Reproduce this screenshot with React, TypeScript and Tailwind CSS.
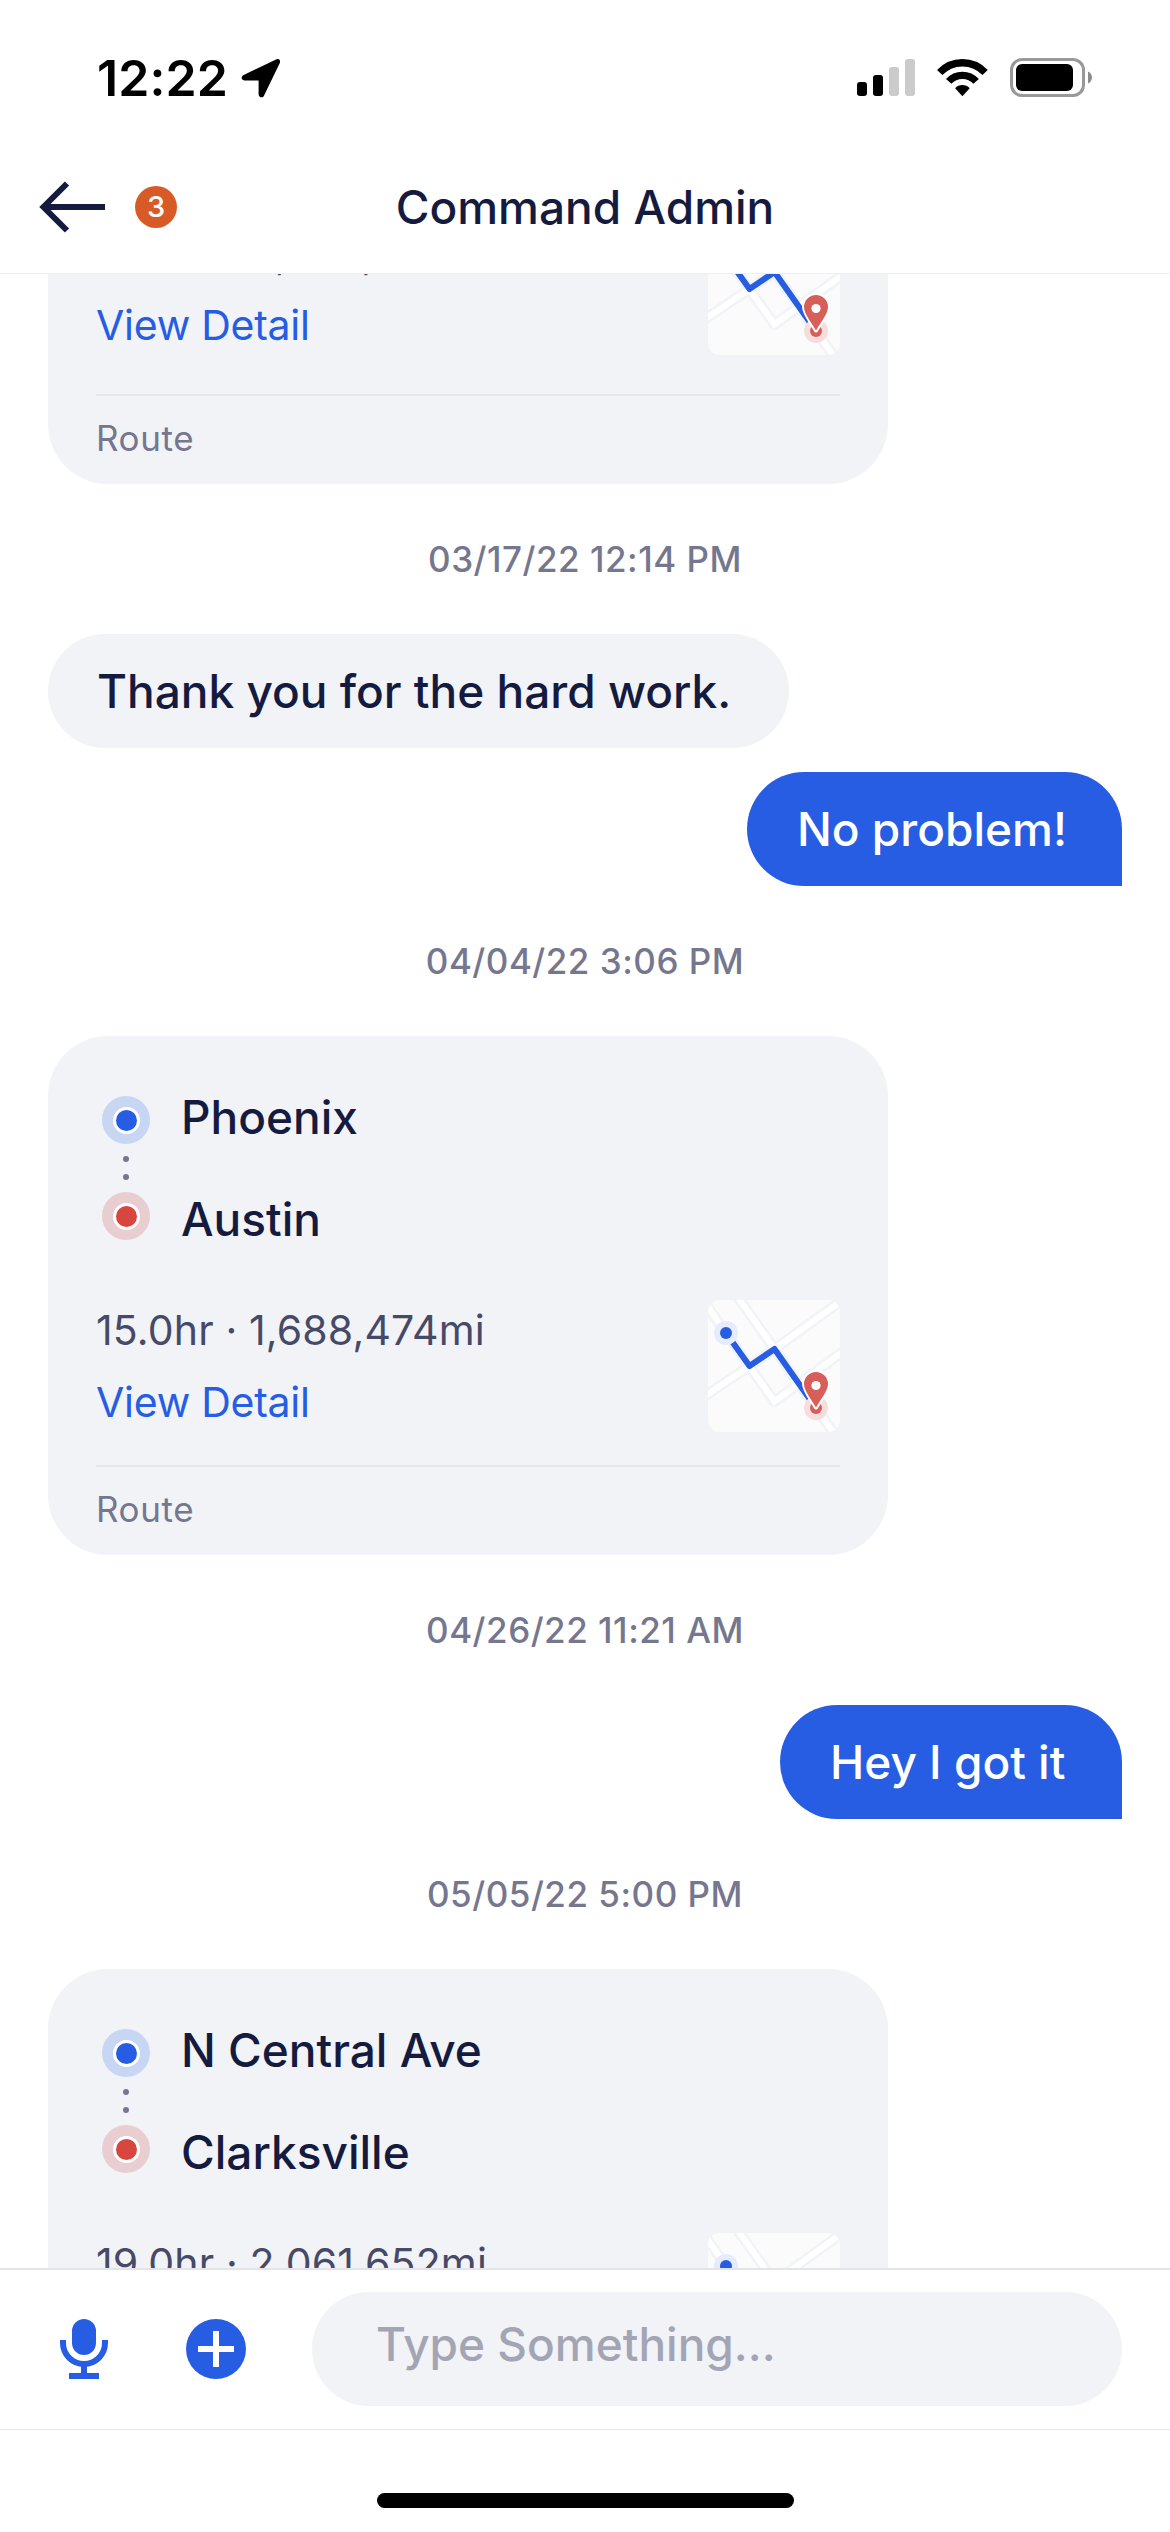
import type React from "react";

interface Stops {
  from: string;
  to: string;
}

type Entry =
  | { kind: "date"; text: string }
  | { kind: "received"; text: string }
  | { kind: "sent"; text: string; className: string }
  | { kind: "route"; summary: string; stops?: Stops };

const entries: Entry[] = [
  { kind: "route", summary: "20.0hr · 1,688,420mi" },
  { kind: "date", text: "03/17/22 12:14 PM" },
  { kind: "received", text: "Thank you for the hard work." },
  { kind: "sent", text: "No problem!", className: "mt-6 w-[375px] pl-[50px]" },
  { kind: "date", text: "04/04/22 3:06 PM" },
  {
    kind: "route",
    summary: "15.0hr · 1,688,474mi",
    stops: { from: "Phoenix", to: "Austin" },
  },
  { kind: "date", text: "04/26/22 11:21 AM" },
  { kind: "sent", text: "Hey I got it", className: "w-[342px] pl-[50px]" },
  { kind: "date", text: "05/05/22 5:00 PM" },
  {
    kind: "route",
    summary: "19.0hr · 2,061,652mi",
    stops: { from: "N Central Ave", to: "Clarksville" },
  },
];

function StatusBar(): React.ReactElement {
  return (
    <div className="flex h-[141px] items-start justify-between pr-[78px] pl-[97px]">
      <div className="flex pt-[48px]">
        <span className="w-[144px] text-[50px] leading-[60px] font-semibold tracking-[0.1px] text-black">
          12:22
        </span>
        <svg className="mt-[10px] h-[40px] w-[40px]" viewBox="0 0 40 40">
          <path
            d="M35.6 1.3 2.2 17.2C-.2 18.6.2 22.4 3.4 22.4H17.6V36.2C17.6 39.8 22 40.6 23.2 37.2L38.8 5C39.8 2 38 .2 35.6 1.3Z"
            fill="#000"
          />
        </svg>
      </div>
      <div className="flex pt-[58px]">
        <svg className="h-[40px] w-[58px]" viewBox="0 0 58 40">
          <rect x="0" y="24" width="10" height="14" rx="3" fill="#000" />
          <rect x="16" y="17" width="10" height="21" rx="3" fill="#000" />
          <rect x="32" y="9" width="10" height="29" rx="3" fill="#cbcbcb" />
          <rect x="48" y="1" width="10" height="37" rx="3" fill="#cbcbcb" />
        </svg>
        <svg className="ml-[22px] h-[40px] w-[51px]" viewBox="0 0 51 40">
          <g fill="none" stroke="#000" strokeWidth="7.3">
            <path d="M2.7 14.6A31.1 31.1 0 0 1 48.1 14.6" />
            <path d="M11.7 23.4A18.4 18.4 0 0 1 39.1 23.4" />
          </g>
          <path d="M18.1 30.2A9.8 9.8 0 0 1 32.7 30.2L25.4 38.2Z" fill="#000" />
        </svg>
        <svg className="ml-[22px] h-[40px] w-[82px]" viewBox="0 0 82 40">
          <rect
            x="1.5"
            y="1.5"
            width="72"
            height="36"
            rx="10.5"
            fill="none"
            stroke="#999"
            strokeWidth="3"
          />
          <rect x="6" y="6" width="57" height="27" rx="6" fill="#000" />
          <path d="M78 13.5C80.6 14.6 82 17 82 19.5S80.6 24.4 78 25.5Z" fill="#8c8c8c" />
        </svg>
      </div>
    </div>
  );
}

function Header(): React.ReactElement {
  return (
    <header className="h-[274px] shrink-0 border-b border-[#eeeff3] bg-white">
      <StatusBar />
      <div className="grid h-[132px] grid-cols-[1fr_auto_1fr] items-center px-[39px]">
        <div className="flex items-center gap-[29px]">
          <svg className="h-[52px] w-[67px]" viewBox="0 0 67 52">
            <path
              d="M66 26H5M28 2.5 4.5 26 28 49.5"
              fill="none"
              stroke="#151b3f"
              strokeWidth="6"
            />
          </svg>
          <span className="h-[42px] w-[42px] rounded-full bg-[#d85b27] text-center text-[29px] leading-[42px] font-medium text-white">
            3
          </span>
        </div>
        <h1 className="text-[46px] font-medium whitespace-nowrap">Command Admin</h1>
      </div>
    </header>
  );
}

function MapThumb(): React.ReactElement {
  const roads = [
    "M-10-7 18 33 41.5 66.5 66.5 101.5 140 48",
    "M-10 101 41.5 66 66.5 49 140-4",
    "M24-11 66.5 49 108 108 130 139",
  ];
  return (
    <svg className="h-[132px] w-[132px] shrink-0 rounded-xl bg-[#fbfbfc]" viewBox="0 0 132 132">
      <g fill="none" stroke="#f2f3f7" strokeWidth="11" strokeLinejoin="round">
        {roads.map((d) => (
          <path key={d} d={d} />
        ))}
      </g>
      <g fill="none" stroke="#fff" strokeWidth="6">
        {roads.map((d) => (
          <path key={d} d={d} />
        ))}
      </g>
      <path
        d="M18 33 41.5 66 66.5 49 108 108"
        fill="none"
        stroke="#265de2"
        strokeWidth="6"
        strokeLinejoin="round"
      />
      <circle cx="18" cy="33" r="12" fill="#e6ecfb" />
      <circle cx="18" cy="33" r="6" fill="#265de2" />
      <circle cx="108" cy="108" r="12" fill="#f8dddd" />
      <circle cx="108" cy="108" r="6" fill="#d85e59" />
      <path
        d="M108 107.5C104.5 101 96 91 96 84A12 12 0 0 1 120 84C120 91 111.5 101 108 107.5Z"
        fill="#d85e59"
        stroke="#fff"
        strokeWidth="4"
        strokeLinejoin="round"
        paintOrder="stroke"
      />
      <circle cx="108" cy="85.5" r="4.6" fill="#fff" />
    </svg>
  );
}

function RouteRail(): React.ReactElement {
  return (
    <div className="mt-[30px] flex w-[48px] flex-col items-center">
      <span className="flex h-[48px] w-[48px] items-center justify-center rounded-full bg-[#c7d6f3]">
        <span className="h-[27px] w-[27px] rounded-full border-[3px] border-white bg-[#265de2]" />
      </span>
      <span className="mt-3 h-[6px] w-[6px] rounded-full bg-[#75778f]" />
      <span className="mt-3 mb-3 h-[6px] w-[6px] rounded-full bg-[#75778f]" />
      <span className="flex h-[48px] w-[48px] items-center justify-center rounded-full bg-[#e9ced1]">
        <span className="h-[27px] w-[27px] rounded-full border-[3px] border-white bg-[#d8473f]" />
      </span>
    </div>
  );
}

function RouteCard({ summary, stops }: { summary: string; stops?: Stops }): React.ReactElement {
  return (
    <article
      className={`w-[840px] shrink-0 self-start rounded-[60px] bg-[#f1f3f7] px-[48px] pb-[4px] ${
        stops ? "pt-[30px]" : "-mt-[81px]"
      }`}
    >
      {stops && (
        <div className="flex gap-[31px] pl-[6px]">
          <RouteRail />
          <div className="text-[46px] leading-[102px] font-medium">
            <p>{stops.from}</p>
            <p>{stops.to}</p>
          </div>
        </div>
      )}
      <div className="flex items-center justify-between pt-6">
        <div className="text-[41px] leading-[72px]">
          <p className="tracking-[0.15px] text-[#474a67]">{summary}</p>
          <p className="tracking-[-0.25px] text-[#265de2]">View Detail</p>
        </div>
        <MapThumb />
      </div>
      <div className={`h-[2px] bg-[#e5e6ea] ${stops ? "mt-[27px]" : "mt-[33px]"}`} />
      <p className="text-[35px] leading-[84px] tracking-[0.6px] text-[#75778f]">Route</p>
    </article>
  );
}

function ChatEntry({ entry }: { entry: Entry }): React.ReactElement {
  switch (entry.kind) {
    case "date":
      return (
        <p className="h-[150px] shrink-0 text-center text-[35px] leading-[150px] font-medium tracking-[0.5px] text-[#75778f]">
          {entry.text}
        </p>
      );
    case "received":
      return (
        <p className="h-[114px] w-[741px] shrink-0 self-start rounded-full bg-[#f1f3f7] pl-[49px] text-[46px] leading-[114px] font-medium whitespace-nowrap">
          {entry.text}
        </p>
      );
    case "sent":
      return (
        <p
          className={`h-[114px] shrink-0 self-end rounded-l-[57px] rounded-tr-[57px] bg-[#265de2] text-[46px] leading-[114px] font-medium whitespace-nowrap text-white ${entry.className}`}
        >
          {entry.text}
        </p>
      );
    case "route":
      return <RouteCard summary={entry.summary} stops={entry.stops} />;
  }
}

function Composer(): React.ReactElement {
  return (
    <footer className="h-[264px] shrink-0 bg-white">
      <div className="flex h-[162px] items-center border-t-2 border-b border-t-[#e3e4e9] border-b-[#e5e6ea] pr-[48px] pb-[1px] pl-[60px]">
        <svg className="h-[60px] w-[48px]" viewBox="0 0 48 60" fill="#265de2">
          <rect x="12" y="0" width="24" height="36" rx="12" />
          <path d="M3 21V24A21 21 0 0 0 45 24V21" fill="none" stroke="#265de2" strokeWidth="6" />
          <path d="M21 46H27V54H39V60H9V54H21Z" />
        </svg>
        <svg className="ml-[78px] h-[60px] w-[60px]" viewBox="0 0 60 60">
          <circle cx="30" cy="30" r="30" fill="#265de2" />
          <path d="M30 12V48M12 30H48" stroke="#fff" strokeWidth="6" />
        </svg>
        <div className="ml-[66px] h-[114px] flex-1 rounded-full bg-[#f1f3f7] pl-[64px] text-[46px] leading-[105px] font-medium text-[#a4a5b4]">
          Type Something...
        </div>
      </div>
      <div className="mx-auto mt-[63px] h-[15px] w-[417px] rounded-full bg-black" />
    </footer>
  );
}

export default function App(): React.ReactElement {
  return (
    <div className="flex h-[2532px] w-[1170px] flex-col overflow-hidden bg-white font-['Inter',sans-serif] text-[#151b3f]">
      <Header />
      <main className="flex min-h-0 flex-1 flex-col overflow-hidden px-[48px]">
        {entries.map((entry, index) => (
          <ChatEntry key={index} entry={entry} />
        ))}
      </main>
      <Composer />
    </div>
  );
}
